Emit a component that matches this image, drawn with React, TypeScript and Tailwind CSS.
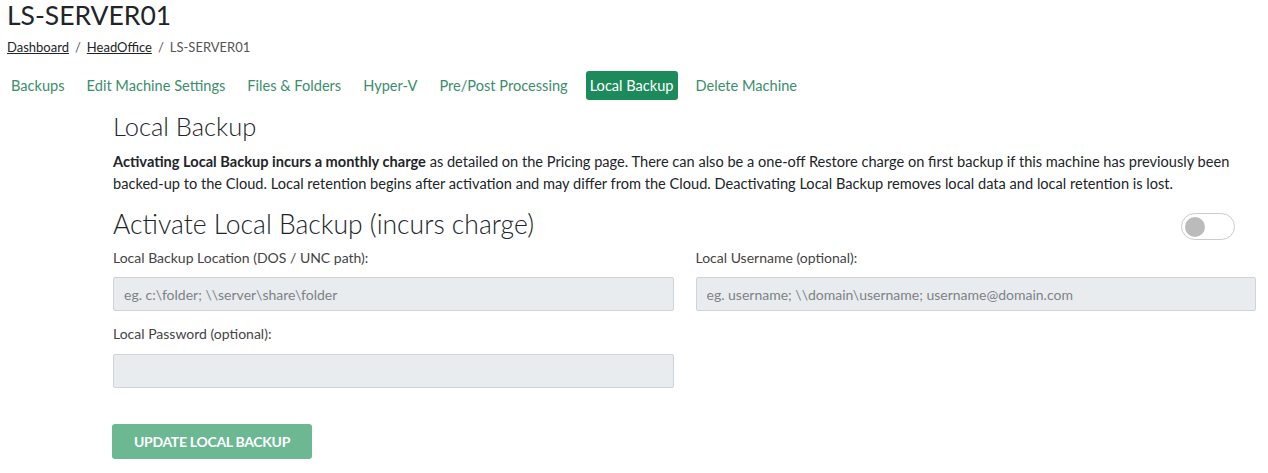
import React from "react";

export default function App() {
  const tabs = ["Backups", "Edit Machine Settings", "Files & Folders", "Hyper-V", "Pre/Post Processing", "Local Backup", "Delete Machine"];
  return (
    <div className="w-[1268px] h-[473px] bg-white overflow-hidden text-[#212529]" style={{ fontFamily: "Lato, 'Open Sans', sans-serif" }}>
      <div className="pl-[7px] pt-[1px]">
        <h1 className="text-[26.5px] leading-[28px] font-normal text-[#212529]">LS-SERVER01</h1>
        <div className="mt-[10px] text-[13px] leading-[16px] text-[#555] flex gap-[6px]">
          <span className="underline text-[#212529]">Dashboard</span>
          <span>/</span>
          <span className="underline text-[#212529]">HeadOffice</span>
          <span>/</span>
          <span>LS-SERVER01</span>
        </div>
        <div className="mt-[16px] flex items-center gap-[14px] text-[14.6px] text-[#3b8e6c]">
          {tabs.map((t) =>
            t === "Local Backup" ? (
              <span key={t} className="bg-[#1d8a5c] text-white rounded-[3px] px-[4px] h-[29px] flex items-center">{t}</span>
            ) : (
              <span key={t} className="px-[4px] h-[29px] flex items-center">{t}</span>
            )
          )}
        </div>
      </div>
      <div className="pl-[113px] pr-[12px] mt-[11px]">
        <h2 className="text-[25.5px] leading-[30px] font-light">Local Backup</h2>
        <p className="mt-[10px] text-[14.6px] leading-[22px] text-[#212529]">
          <b className="font-bold">Activating Local Backup incurs a monthly charge</b> as detailed on the Pricing page. There can also be a one-off Restore charge on first backup if this machine has previously been backed-up to the Cloud. Local retention begins after activation and may differ from the Cloud. Deactivating Local Backup removes local data and local retention is lost.
        </p>
        <div className="mt-[12px] flex items-center justify-between">
          <h2 className="text-[26.5px] leading-[30px] font-light">Activate Local Backup (incurs charge)</h2>
          <div className="mr-[21px] mt-[6px] w-[54px] h-[27px] rounded-full border border-[#ccc] bg-white flex items-center px-[3px]">
            <div className="w-[20px] h-[20px] rounded-full bg-[#bbb]" />
          </div>
        </div>
        <div className="mt-[9px] grid grid-cols-2 gap-x-[22px]">
          <div>
            <label className="block text-[14px] leading-[18px] text-[#444]">Local Backup Location (DOS / UNC path):</label>
            <input disabled placeholder="eg. c:\folder; \\server\share\folder" className="mt-[10px] w-full h-[34px] bg-[#e9ecef] border border-[#ced4da] rounded-[2px] px-[10px] text-[14px] placeholder:text-[#7d8287]" />
          </div>
          <div>
            <label className="block text-[14px] leading-[18px] text-[#444]">Local Username (optional):</label>
            <input disabled placeholder="eg. username; \\domain\username; username@domain.com" className="mt-[10px] w-full h-[34px] bg-[#e9ecef] border border-[#ced4da] rounded-[2px] px-[10px] text-[14px] placeholder:text-[#7d8287]" />
          </div>
          <div className="mt-[14px]">
            <label className="block text-[14px] leading-[18px] text-[#444]">Local Password (optional):</label>
            <input disabled type="password" className="mt-[11px] w-full h-[34px] bg-[#e9ecef] border border-[#ced4da] rounded-[2px] px-[10px] text-[14px]" />
          </div>
        </div>
        <button disabled className="mt-[36px] -ml-[1px] w-[200px] h-[35px] bg-[#6cb893] text-white font-bold text-[14px] rounded-[3px] tracking-[-0.3px]">UPDATE LOCAL BACKUP</button>
      </div>
    </div>
  );
}
